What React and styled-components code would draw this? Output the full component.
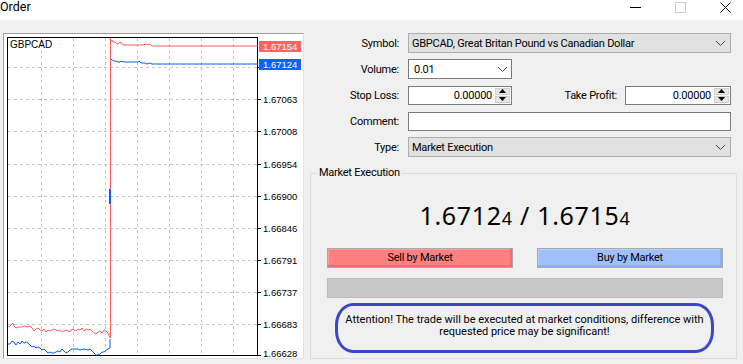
import React from 'react';
import styled, { createGlobalStyle } from 'styled-components';

const GlobalStyle = createGlobalStyle`
  html, body {
    margin:0;
    padding:0;
    background:#f0f0f0;
  }
  body {
    font-family: Roboto, "Noto Sans", sans-serif;
    font-size:11px;
    letter-spacing:-0.25px;
    color:#000;
  }
`

const gridY = [67, 99, 131, 164, 196, 228, 260, 292, 324];
const gridX = [41, 73, 105, 137, 169, 201, 233];
const axisLabels = [
    { y: 99, text: '1.67063' },
    { y: 131, text: '1.67008' },
    { y: 164, text: '1.66954' },
    { y: 196, text: '1.66900' },
    { y: 228, text: '1.66846' },
    { y: 260, text: '1.66791' },
    { y: 292, text: '1.66737' },
    { y: 324, text: '1.66683' },
    { y: 353, text: '1.66628' },
];

const askTop = '110,39 111,41 112,40 113,42 115,42 116,43 118,44 119,43 121,42 122,44 123,45 143,45 144,44 145,45 147,44 148,45 150,44 151,45 152,46 258,46';
const bidTop = '110,58 112,60 114,61 116,61 117,62 120,62 121,61 124,62 138,62 139,61 141,63 145,63 147,64 150,63 152,64 258,64';
const askHistory = '8,327 10,326 12,324 13,323 14,326 16,328 18,327 22,327 24,326 28,327 30,326 32,328 34,331 36,329 38,328 40,330 42,331 44,329 46,332 48,330 50,331 52,330 54,329 56,330 58,331 60,330 62,332 64,331 66,330 68,331 70,332 72,329 74,330 76,331 78,329 80,330 82,328 84,331 86,329 88,330 90,329 92,331 94,333 96,334 98,332 100,331 102,333 104,330 106,331 108,333 110,338';
const bidHistory = '8,344 10,344 12,341 14,342 16,345 18,342 20,344 22,341 24,343 26,342 28,343 30,345 32,347 34,346 36,348 38,347 40,348 42,350 44,349 46,351 48,353 50,352 52,353 54,353 56,352 58,351 60,352 62,349 64,351 66,353 68,352 70,350 72,349 74,349 78,349 80,350 84,349 88,350 90,349 92,351 94,353 96,355 98,355 100,354 102,352 104,352 106,350 108,349 110,348 110,339';

const Chevron = () => (
    <svg width="11" height="7" viewBox="0 0 11 7">
        <path d="M1 1 L5.5 5.5 L10 1" fill="none" stroke="#444" strokeWidth="1" />
    </svg>
);

const Spinner = () => (
    <SpinBox>
        <SpinHalf>
            <svg width="7" height="4" viewBox="0 0 7 4"><path d="M3.5 0 L7 4 L0 4 Z" fill="#000" /></svg>
        </SpinHalf>
        <SpinHalf>
            <svg width="7" height="4" viewBox="0 0 7 4"><path d="M0 0 L7 0 L3.5 4 Z" fill="#000" /></svg>
        </SpinHalf>
    </SpinBox>
);

const PriceChart = () => (
    <ChartPanel>
        <svg width="299" height="324" viewBox="4 34 299 324">
            <rect x="4" y="34" width="299" height="324" fill="#fff" />
            {gridY.map(y => (
                <line key={'h' + y} x1="8" x2="257" y1={y + 0.5} y2={y + 0.5} stroke="#c6c6c6" strokeDasharray="3 3" />
            ))}
            {gridX.map(x => (
                <line key={'v' + x} x1={x + 0.5} x2={x + 0.5} y1="38" y2="355" stroke="#c6c6c6" strokeDasharray="3 3" />
            ))}
            <rect x="7.5" y="37.5" width="250" height="318" fill="none" stroke="#000" />
            {[...gridY, 355].map(y => (
                <line key={'t' + y} x1="258" x2="261" y1={y + 0.5} y2={y + 0.5} stroke="#000" />
            ))}
            {axisLabels.map(l => (
                <ChartText key={l.text} x="263" y={l.y + 4}>{l.text}</ChartText>
            ))}
            <line x1="110.5" x2="110.5" y1="38" y2="338" stroke="#ff5c5c" />
            <line x1="110" x2="110" y1="189" y2="204" stroke="#0a5cff" strokeWidth="2" />
            <polyline points={askTop} fill="none" stroke="#ff5c5c" />
            <polyline points={bidTop} fill="none" stroke="#0a5cff" />
            <polyline points={askHistory} fill="none" stroke="#ff5c5c" />
            <polyline points={bidHistory} fill="none" stroke="#0a5cff" />
            <rect x="259" y="41" width="42" height="11" fill="#ff6464" />
            <ChartText x="263" y="50" fill="#fff">1.67154</ChartText>
            <rect x="259" y="59" width="42" height="11" fill="#0a64ff" />
            <ChartText x="263" y="68" fill="#fff">1.67124</ChartText>
            <ChartText x="10" y="48" size="10px">GBPCAD</ChartText>
        </svg>
    </ChartPanel>
);

const App = () => {
    return (
        <Window>
            <GlobalStyle />
            <TitleBar>
                <Title>Order</Title>
                <WinButtons>
                    <WinButton>
                        <svg width="11" height="11" viewBox="0 0 11 11"><line x1="0" x2="11" y1="5.5" y2="5.5" stroke="#000" /></svg>
                    </WinButton>
                    <WinButton>
                        <svg width="11" height="11" viewBox="0 0 11 11"><rect x="0.5" y="0.5" width="10" height="10" fill="none" stroke="#cccccc" /></svg>
                    </WinButton>
                    <WinButton>
                        <svg width="11" height="11" viewBox="0 0 11 11"><path d="M0.5 0.5 L10.5 10.5 M10.5 0.5 L0.5 10.5" stroke="#000" /></svg>
                    </WinButton>
                </WinButtons>
            </TitleBar>
            <Body>
                <PriceChart />
                <FormColumn>
                    <FormRow>
                        <Label>Symbol:</Label>
                        <Select>
                            <span>GBPCAD, Great Britan Pound vs Canadian Dollar</span>
                            <Chevron />
                        </Select>
                    </FormRow>
                    <FormRow>
                        <Label>Volume:</Label>
                        <Combo>
                            <span>0.01</span>
                            <Chevron />
                        </Combo>
                    </FormRow>
                    <FormRow>
                        <Label>Stop Loss:</Label>
                        <FieldLine>
                            <SpinInput width="104px">
                                <SpinValue>0.00000</SpinValue>
                                <Spinner />
                            </SpinInput>
                            <InlineLabel>Take Profit:</InlineLabel>
                            <SpinInput width="106px">
                                <SpinValue>0.00000</SpinValue>
                                <Spinner />
                            </SpinInput>
                        </FieldLine>
                    </FormRow>
                    <FormRow>
                        <Label>Comment:</Label>
                        <TextBox />
                    </FormRow>
                    <FormRow>
                        <Label>Type:</Label>
                        <Select>
                            <span>Market Execution</span>
                            <Chevron />
                        </Select>
                    </FormRow>
                    <GroupBox>
                        <Legend>Market Execution</Legend>
                        <GroupContent>
                            <Quote>
                                1.6712<small>4</small> / 1.6715<small>4</small>
                            </Quote>
                            <ButtonRow>
                                <TradeButton kind="sell">Sell by Market</TradeButton>
                                <TradeButton kind="buy">Buy by Market</TradeButton>
                            </ButtonRow>
                            <ProgressBar />
                            <Notice>
                                Attention! The trade will be executed at market conditions, difference with<br />
                                requested price may be significant!
                            </Notice>
                        </GroupContent>
                    </GroupBox>
                </FormColumn>
            </Body>
        </Window>
    )
}

export default App;

const Window = styled.div`
    width:743px;
    height:364px;
    overflow:hidden;
    background:#f0f0f0;
    display:flex;
    flex-direction:column;
`
const TitleBar = styled.div`
    height:20px;
    flex-shrink:0;
    background:#fff;
    display:flex;
    align-items:flex-start;
`
const Title = styled.div`
    flex:1;
    font-size:12.5px;
    letter-spacing:0;
    line-height:13px;
`
const WinButtons = styled.div`
    display:flex;
    margin-right:-5px;
`
const WinButton = styled.div`
    width:45px;
    height:14px;
    display:flex;
    align-items:center;
    justify-content:center;
    svg { display:block; }
`
const Body = styled.div`
    display:flex;
    padding:13px 0 0 3px;
    gap:6px;
`
const ChartPanel = styled.div`
    width:301px;
    height:326px;
    box-sizing:border-box;
    border:1px solid #a0a0a0;
    border-right-color:#e3e3e3;
    border-bottom-color:#e3e3e3;
    background:#fff;
    flex-shrink:0;
    svg { display:block; }
`
const ChartText = styled.text`
    font-family:"Liberation Sans", Arial, sans-serif;
    font-size:${p => p.size || '9.5px'};
    letter-spacing:0;
`
const FormColumn = styled.div`
    width:427px;
    display:flex;
    flex-direction:column;
    gap:6px;
`
const FormRow = styled.div`
    display:grid;
    grid-template-columns:89px 1fr;
    column-gap:9px;
    align-items:center;
    height:20px;
    margin-right:6px;
`
const Label = styled.div`
    text-align:right;
    white-space:nowrap;
`
const Select = styled.div`
    height:20px;
    box-sizing:border-box;
    border:1px solid #adadad;
    background:#e1e1e1;
    display:flex;
    align-items:center;
    justify-content:space-between;
    padding:0 4px 0 3px;
    svg { display:block; }
`
const Combo = styled(Select)`
    width:104px;
    background:#fff;
    border-color:#7a7a7a;
    padding-left:5px;
    padding-right:3px;
`
const FieldLine = styled.div`
    display:flex;
    align-items:center;
    height:20px;
`
const SpinInput = styled.div`
    width:${p => p.width};
    height:19px;
    box-sizing:border-box;
    border:1px solid #7a7a7a;
    background:#fff;
    display:flex;
    align-items:stretch;
    padding:1px;
`
const SpinValue = styled.div`
    flex:1;
    text-align:right;
    padding-right:3px;
    line-height:15px;
`
const SpinBox = styled.div`
    width:15px;
    display:flex;
    flex-direction:column;
    gap:1px;
`
const SpinHalf = styled.div`
    flex:1;
    background:#e5e5e5;
    border:1px solid #cfcfcf;
    display:flex;
    align-items:center;
    justify-content:center;
    svg { display:block; }
`
const InlineLabel = styled.div`
    margin-left:auto;
    margin-right:8px;
    white-space:nowrap;
`
const TextBox = styled.div`
    height:19px;
    box-sizing:border-box;
    border:1px solid #7a7a7a;
    background:#fff;
`
const GroupBox = styled.fieldset`
    margin:3px 0 0 0;
    padding:0 13px 4px 16px;
    border:1px solid #dcdcdc;
    min-width:0;
    height:193px;
    box-sizing:border-box;
`
const Legend = styled.legend`
    margin-left:-10px;
    padding:0 2px;
    line-height:14px;
`
const GroupContent = styled.div`
    display:flex;
    flex-direction:column;
`
const Quote = styled.div`
    margin-top:20px;
    height:30px;
    line-height:30px;
    text-align:center;
    font-family:"Noto Sans", sans-serif;
    font-size:25px;
    letter-spacing:0.7px;
    small {
        font-size:18px;
    }
`
const ButtonRow = styled.div`
    margin-top:18px;
    display:grid;
    grid-template-columns:1fr 1fr;
    column-gap:24px;
`
const TradeButton = styled.div`
    height:20px;
    box-sizing:border-box;
    border:1px solid #a9a9a9;
    background:${p => p.kind === 'sell' ? '#ff8080' : '#9fbfff'};
    box-shadow:${p => p.kind === 'sell'
        ? 'inset -2px -2px 0 #e87070, inset 1px 1px 0 #ff9c9c'
        : 'inset -2px -2px 0 #8eaeee, inset 1px 1px 0 #b6d0ff'};
    text-align:center;
    line-height:18px;
`
const ProgressBar = styled.div`
    margin-top:10px;
    height:20px;
    box-sizing:border-box;
    border:1px solid #b9b9b9;
    background:#c8c8c8;
`
const Notice = styled.div`
    margin:5px 9px 0 8px;
    height:50px;
    box-sizing:border-box;
    border:3px solid #3c47c6;
    border-radius:18px / 22px;
    text-align:center;
    font-size:11px;
    letter-spacing:0;
    line-height:12px;
    padding-top:8px;
    white-space:nowrap;
`
